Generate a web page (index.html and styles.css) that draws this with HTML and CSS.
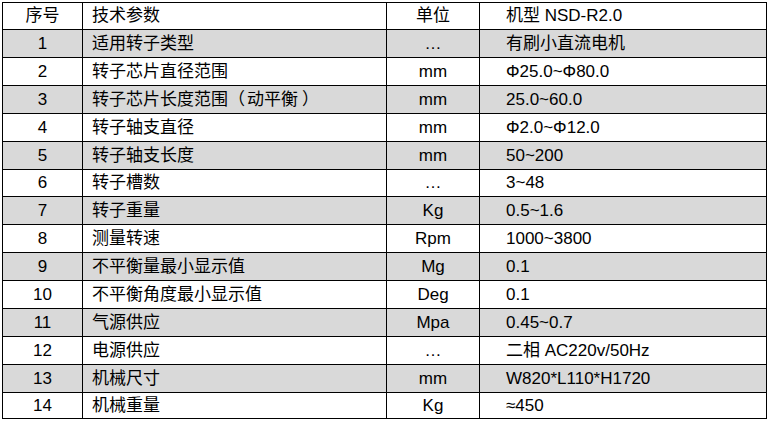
FILE: index.html
```html
<!DOCTYPE html>
<html lang="zh">
<head>
<meta charset="utf-8">
<link rel="stylesheet" href="styles.css">
</head>
<body>
<table class="spec">
  <colgroup>
    <col class="c-no"><col class="c-name"><col class="c-unit"><col class="c-val">
  </colgroup>
  <tr class="short"><td class="ctr">序号</td><td class="name">技术参数</td><td class="ctr">单位</td><td class="val">机型 NSD-R2.0</td></tr>
  <tr class="gray"><td class="ctr">1</td><td class="name">适用转子类型</td><td class="ctr">…</td><td class="val">有刷小直流电机</td></tr>
  <tr><td class="ctr">2</td><td class="name">转子芯片直径范围</td><td class="ctr">mm</td><td class="val">Φ25.0~Φ80.0</td></tr>
  <tr class="gray"><td class="ctr">3</td><td class="name">转子芯片长度范围<span class="lp">（</span>动平衡<span class="rp">）</span></td><td class="ctr">mm</td><td class="val">25.0~60.0</td></tr>
  <tr><td class="ctr">4</td><td class="name">转子轴支直径</td><td class="ctr">mm</td><td class="val">Φ2.0~Φ12.0</td></tr>
  <tr class="gray"><td class="ctr">5</td><td class="name">转子轴支长度</td><td class="ctr">mm</td><td class="val">50~200</td></tr>
  <tr class="short"><td class="ctr">6</td><td class="name">转子槽数</td><td class="ctr">…</td><td class="val">3~48</td></tr>
  <tr class="gray"><td class="ctr">7</td><td class="name">转子重量</td><td class="ctr">Kg</td><td class="val">0.5~1.6</td></tr>
  <tr><td class="ctr">8</td><td class="name">测量转速</td><td class="ctr">Rpm</td><td class="val">1000~3800</td></tr>
  <tr class="gray"><td class="ctr">9</td><td class="name">不平衡量最小显示值</td><td class="ctr">Mg</td><td class="val">0.1</td></tr>
  <tr><td class="ctr">10</td><td class="name">不平衡角度最小显示值</td><td class="ctr">Deg</td><td class="val">0.1</td></tr>
  <tr class="gray"><td class="ctr">11</td><td class="name">气源供应</td><td class="ctr">Mpa</td><td class="val">0.45~0.7</td></tr>
  <tr><td class="ctr">12</td><td class="name">电源供应</td><td class="ctr">…</td><td class="val">二相 AC220v/50Hz</td></tr>
  <tr class="gray"><td class="ctr">13</td><td class="name">机械尺寸</td><td class="ctr">mm</td><td class="val">W820*L110*H1720</td></tr>
  <tr class="short2"><td class="ctr">14</td><td class="name">机械重量</td><td class="ctr">Kg</td><td class="val">≈450</td></tr>
</table>
</body>
</html>
```
FILE: styles.css
```css
html, body {
  margin: 0;
  padding: 0;
  background: #ffffff;
}

body {
  padding: 2px 0 0 2px;
  font-family: "Liberation Sans", "Noto Sans CJK SC", sans-serif;
  font-size: 17px;
  color: #000000;
}

.spec {
  border-collapse: collapse;
  table-layout: fixed;
  width: 764px;
}

.c-no { width: 80px; }
.c-name { width: 304px; }
.c-unit { width: 93px; }
.c-val { width: 287px; }

.spec td {
  border: 1px solid #000000;
  padding: 0;
  line-height: 20px;
  vertical-align: middle;
  white-space: nowrap;
  box-sizing: border-box;
  height: 28px;
}

.spec tr.short td { height: 27px; }
.spec tr.short2 td { height: 26px; }

.spec tr.gray td { background: #d9d9d9; }

.ctr { text-align: center; }
.name { padding-left: 9px !important; }
.val { padding-left: 26px !important; }

.lp {
  display: inline-block;
  margin-right: 2px;
}
.rp {
  display: inline-block;
  margin-left: 4px;
}
```
